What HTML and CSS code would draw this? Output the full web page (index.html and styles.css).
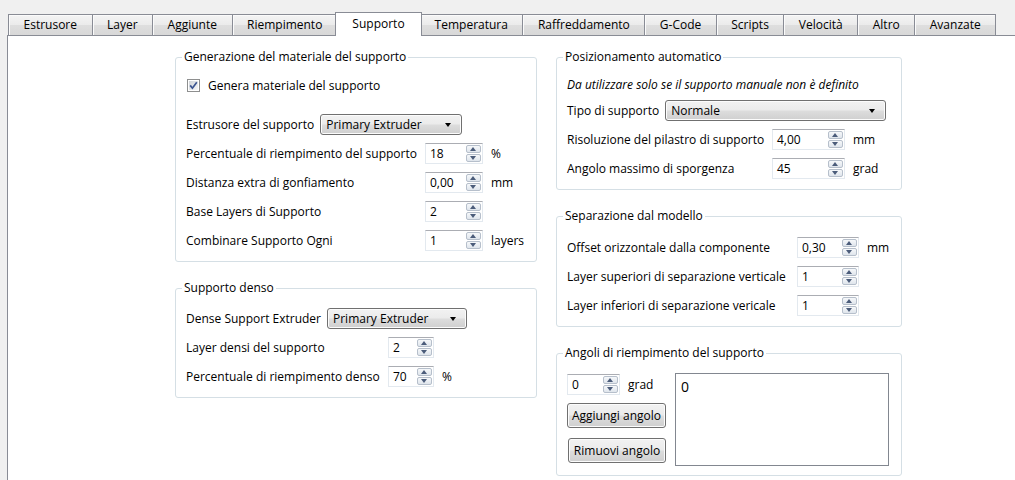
FILE: index.html
```html
<!DOCTYPE html>
<html lang="it">
<head>
    <meta charset="UTF-8">
    <meta name="viewport" content="width=device-width, initial-scale=1.0">
    <title>Supporto</title>
    <link rel="stylesheet" href="styles.css">
</head>
<body>

    <div class="tabs">
        <div class="tab">Estrusore</div>
        <div class="tab">Layer</div>
        <div class="tab">Aggiunte</div>
        <div class="tab">Riempimento</div>
        <div class="tab active">Supporto</div>
        <div class="tab">Temperatura</div>
        <div class="tab">Raffreddamento</div>
        <div class="tab">G-Code</div>
        <div class="tab">Scripts</div>
        <div class="tab">Velocità</div>
        <div class="tab">Altro</div>
        <div class="tab">Avanzate</div>
    </div>

    <div class="pane">
        <div class="column col-left">

            <fieldset class="group g-gen">
                <legend>Generazione del materiale del supporto</legend>
                <div class="check-row">
                    <span class="checkbox">
                        <svg width="13" height="13" viewBox="0 0 13 13">
                            <defs>
                                <linearGradient id="cbg" x1="0" y1="0" x2="1" y2="1">
                                    <stop offset="0" stop-color="#cfd3d8"/>
                                    <stop offset="1" stop-color="#f6f7f8"/>
                                </linearGradient>
                            </defs>
                            <rect x="0.5" y="0.5" width="12" height="12" fill="#fff" stroke="#8e8f8f"/>
                            <rect x="2" y="2" width="9" height="9" fill="url(#cbg)"/>
                            <path d="M3.2 6.4 L5.4 9.2 L9.8 3.2" fill="none" stroke="#3b5490" stroke-width="1.7"/>
                        </svg>
                    </span>
                    <span>Genera materiale del supporto</span>
                </div>
                <div class="combo-row">
                    <span>Estrusore del supporto</span>
                    <div class="combo combo-ext">Primary Extruder<i class="caret"></i></div>
                </div>
                <div class="form-grid">
                    <span>Percentuale di riempimento del supporto</span>
                    <div class="spin"><span>18</span><span class="arrows"><i class="up"></i><i class="down"></i></span></div>
                    <span class="unit">%</span>

                    <span>Distanza extra di gonfiamento</span>
                    <div class="spin"><span>0,00</span><span class="arrows"><i class="up"></i><i class="down"></i></span></div>
                    <span class="unit">mm</span>

                    <span>Base Layers di Supporto</span>
                    <div class="spin"><span>2</span><span class="arrows"><i class="up"></i><i class="down"></i></span></div>
                    <span class="unit"></span>

                    <span>Combinare Supporto Ogni</span>
                    <div class="spin"><span>1</span><span class="arrows"><i class="up"></i><i class="down"></i></span></div>
                    <span class="unit">layers</span>
                </div>
            </fieldset>

            <fieldset class="group g-dense">
                <legend>Supporto denso</legend>
                <div class="combo-row">
                    <span>Dense Support Extruder</span>
                    <div class="combo combo-dense">Primary Extruder<i class="caret"></i></div>
                </div>
                <div class="form-grid">
                    <span>Layer densi del supporto</span>
                    <div class="spin"><span>2</span><span class="arrows"><i class="up"></i><i class="down"></i></span></div>
                    <span class="unit"></span>

                    <span>Percentuale di riempimento denso</span>
                    <div class="spin"><span>70</span><span class="arrows"><i class="up"></i><i class="down"></i></span></div>
                    <span class="unit">%</span>
                </div>
            </fieldset>

        </div>

        <div class="column col-right">

            <fieldset class="group g-auto">
                <legend>Posizionamento automatico</legend>
                <div class="note">Da utilizzare solo se il supporto manuale non è definito</div>
                <div class="combo-row">
                    <span>Tipo di supporto</span>
                    <div class="combo combo-type">Normale<i class="caret"></i></div>
                </div>
                <div class="form-grid">
                    <span>Risoluzione del pilastro di supporto</span>
                    <div class="spin"><span>4,00</span><span class="arrows"><i class="up"></i><i class="down"></i></span></div>
                    <span class="unit">mm</span>

                    <span>Angolo massimo di sporgenza</span>
                    <div class="spin"><span>45</span><span class="arrows"><i class="up"></i><i class="down"></i></span></div>
                    <span class="unit">grad</span>
                </div>
            </fieldset>

            <fieldset class="group g-sep">
                <legend>Separazione dal modello</legend>
                <div class="form-grid">
                    <span>Offset orizzontale dalla componente</span>
                    <div class="spin"><span>0,30</span><span class="arrows"><i class="up"></i><i class="down"></i></span></div>
                    <span class="unit">mm</span>

                    <span>Layer superiori di separazione verticale</span>
                    <div class="spin"><span>1</span><span class="arrows"><i class="up"></i><i class="down"></i></span></div>
                    <span class="unit"></span>

                    <span>Layer inferiori di separazione vericale</span>
                    <div class="spin"><span>1</span><span class="arrows"><i class="up"></i><i class="down"></i></span></div>
                    <span class="unit"></span>
                </div>
            </fieldset>

            <fieldset class="group g-angles">
                <legend>Angoli di riempimento del supporto</legend>
                <div class="angles">
                    <div class="angle-controls">
                        <div class="angle-input">
                            <div class="spin"><span>0</span><span class="arrows"><i class="up"></i><i class="down"></i></span></div>
                            <span>grad</span>
                        </div>
                        <button class="btn">Aggiungi angolo</button>
                        <button class="btn">Rimuovi angolo</button>
                    </div>
                    <div class="listbox">0</div>
                </div>
            </fieldset>

        </div>
    </div>

</body>
</html>
```

FILE: styles.css
```css
/* general styling */
* {
box-sizing: border-box;
margin: 0;
padding: 0;
}

html, body {
height: 100%;
}

body {
background-color: #f0f0f0;
color: #000;
font-family: "Open Sans", "Noto Sans", sans-serif;
font-size: 12px;
display: flex;
flex-direction: column;
overflow: hidden;
white-space: nowrap;
}

/* tab bar */
.tabs {
display: flex;
align-items: flex-end;
padding: 14px 0 0 8px;
height: 35px;
}

.tab {
height: 21px;
line-height: 19px;
padding: 0 14.5px;
border: 1px solid #898c95;
border-bottom: none;
border-right: none;
background: linear-gradient(#f4f4f4, #ebebeb 50%, #dedede 52%, #d8d8d8);
box-shadow: inset 1px 1px 0 #fbfbfb;
text-align: center;
}

.tab:last-child {
border-right: 1px solid #898c95;
}

.tab.active {
position: relative;
z-index: 2;
height: 24px;
margin: 0 -2px -1px -2px;
padding: 0 16.5px;
line-height: 22px;
background: #fff;
border-right: 1px solid #898c95;
box-shadow: none;
}

.tab.active + .tab {
border-left: none;
}

/* page */
.pane {
flex: 1;
display: flex;
align-items: flex-start;
margin-left: 7px;
padding: 13px 0 0 167px;
background: #fff;
border-top: 1px solid #898c95;
border-left: 1px solid #898c95;
}

.column {
display: flex;
flex-direction: column;
}

.col-left {
width: 362px;
gap: 18px;
}

.col-right {
width: 346px;
margin-left: 19px;
gap: 18px;
}

.group {
border: 1px solid #d5dfe5;
border-radius: 3px;
padding: 0 10px 10px 10px;
display: flex;
flex-direction: column;
}

.group legend {
line-height: 16px;
padding: 0 2px;
margin-left: -4px;
}

/* rows */
.check-row,
.combo-row,
.note {
display: flex;
align-items: center;
height: 21px;
}

.check-row {
margin-top: 10px;
padding-left: 1px;
}

.checkbox {
display: block;
width: 13px;
height: 13px;
margin-right: 8px;
}

.checkbox svg {
display: block;
}

.combo-row {
gap: 6px;
}

.form-grid {
display: grid;
grid-auto-rows: 21px;
row-gap: 8px;
column-gap: 8px;
align-items: center;
}

.note {
font-style: italic;
}

/* combo boxes and buttons */
.combo,
.btn {
position: relative;
height: 21px;
border: 1px solid #707070;
border-radius: 3px;
background: linear-gradient(#f2f2f2, #ebebeb 48%, #dddddd 52%, #cfcfcf);
box-shadow: inset 0 0 0 1px #fcfcfc;
}

.combo {
padding-left: 5px;
line-height: 19px;
}

.caret {
position: absolute;
right: 10px;
top: 8px;
width: 0;
height: 0;
border-left: 3.5px solid transparent;
border-right: 3.5px solid transparent;
border-top: 4px solid #000;
}

.btn {
display: block;
height: 25px;
font: inherit;
color: #000;
padding: 0 2px;
white-space: nowrap;
}

/* spin boxes */
.spin {
display: flex;
align-items: center;
justify-content: space-between;
height: 21px;
padding: 0 1px 0 4px;
border: 1px solid #e3e9ef;
border-top-color: #abadb3;
background: #fff;
}

.arrows {
display: flex;
flex-direction: column;
gap: 1px;
width: 15px;
}

.arrows i {
position: relative;
display: block;
height: 8px;
border: 1px solid #b6bfcb;
border-radius: 2px;
background: linear-gradient(#f6f8fa, #dfe5ec);
}

.arrows i::before {
content: "";
position: absolute;
left: 3px;
width: 0;
height: 0;
border-left: 3.5px solid transparent;
border-right: 3.5px solid transparent;
}

.arrows .up::before {
top: 1px;
border-bottom: 4px solid #4b5c7a;
}

.arrows .down::before {
top: 1px;
border-top: 4px solid #4b5c7a;
}

/* group specific sizes */
.g-gen .combo-row {
margin-top: 18px;
}

.g-gen .combo-ext {
width: 142px;
}

.g-gen .form-grid {
margin-top: 8px;
grid-template-columns: 231px 58px auto;
}

.g-dense .combo-row {
margin-top: 12px;
}

.g-dense .combo-dense {
width: 140px;
}

.g-dense .form-grid {
margin-top: 8px;
grid-template-columns: 194px 46px auto;
}

.g-auto .note {
margin-top: 9px;
}

.g-auto .combo-row {
margin-top: 5px;
}

.g-auto .combo-type {
width: 221px;
}

.g-auto .form-grid {
margin-top: 8px;
grid-template-columns: 197px 73px auto;
}

.g-sep .form-grid {
margin-top: 13px;
grid-template-columns: 222px 62px auto;
}

.g-angles {
padding-bottom: 9px;
}

.angles {
display: flex;
gap: 9px;
margin-top: 12px;
}

.angle-controls {
display: flex;
flex-direction: column;
width: 99px;
}

.angle-input {
display: flex;
align-items: center;
gap: 8px;
margin-top: 1px;
}

.angle-input .spin {
width: 53px;
}

.angle-controls .btn:first-of-type {
margin-top: 8px;
width: 99px;
}

.angle-controls .btn:last-of-type {
margin-top: 10px;
width: 98px;
margin-left: 1px;
}

.listbox {
width: 214px;
height: 93px;
border: 1px solid #828790;
background: #fff;
font-size: 14px;
padding: 3px 0 0 5px;
}
```
